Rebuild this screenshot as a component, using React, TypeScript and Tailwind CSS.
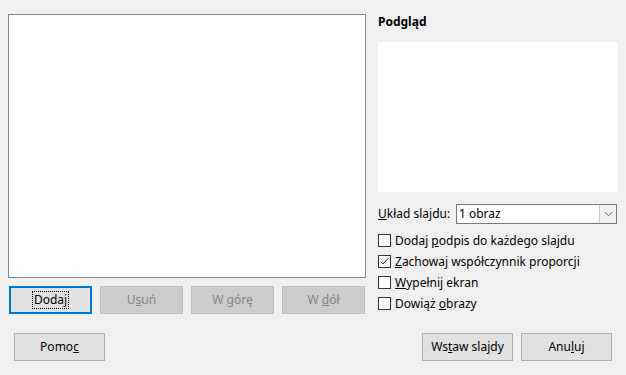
import React from "react";

const font = { fontFamily: '"Noto Sans", "Open Sans", sans-serif' };

function Btn({ children, w = "w-[83px]", disabled = false, focused = false }: { children: React.ReactNode; w?: string; disabled?: boolean; focused?: boolean }) {
  if (focused) {
    return (
      <div className={`${w} h-[28px] border-2 border-[#0078d7] bg-[#e1e1e1] flex items-center justify-center text-[12px] text-black`}>
        <span className="outline-1 outline-dotted outline-black px-[1px] leading-[16px]">{children}</span>
      </div>
    );
  }
  return (
    <div
      className={`${w} h-[28px] border flex items-center justify-center text-[12px] ${
        disabled ? "border-[#bfbfbf] bg-[#cccccc] text-[#838383]" : "border-[#adadad] bg-[#e1e1e1] text-black"
      }`}
    >
      <span className="leading-[16px] whitespace-pre">{children}</span>
    </div>
  );
}

function Check({ checked = false, children }: { checked?: boolean; children: React.ReactNode }) {
  return (
    <div className="h-[21px] flex items-center">
      <div className="w-[13px] h-[13px] border border-[#333333] bg-white flex items-center justify-center">
        {checked && (
          <svg width="11" height="11" viewBox="0 0 11 11">
            <polyline points="1.5,5.5 4,8 9.5,2" fill="none" stroke="#333" strokeWidth="1" />
          </svg>
        )}
      </div>
      <span className="ml-[4px] text-[12px] text-black leading-[16px]">{children}</span>
    </div>
  );
}

export default function App() {
  return (
    <div className="w-[626px] h-[375px] bg-[#f0f0f0] overflow-hidden" style={font}>
      <div className="flex">
        <div className="pl-[8px] pt-[14px]">
          <div className="w-[358px] h-[264px] border border-[#828790] bg-white" />
          <div className="flex gap-[8px] mt-[8px] ml-[1px]">
            <Btn focused>
              Doda<u>j</u>
            </Btn>
            <Btn disabled>
              U<u>s</u>uń
            </Btn>
            <Btn disabled>
              {"W "}<u>g</u>órę
            </Btn>
            <Btn disabled>
              {"W "}<u>d</u>ół
            </Btn>
          </div>
        </div>
        <div className="ml-[12px] pt-[14px] w-[240px]">
          <div className="h-[16px] leading-[16px] text-[12px] font-bold text-black">Podgląd</div>
          <div className="mt-[12px] h-[150px] bg-white" />
          <div className="mt-[12px] flex items-center h-[20px]">
            <span className="text-[12px] text-black w-[78px]">
              <u>U</u>kład slajdu:
            </span>
            <div className="w-[161px] h-[20px] border border-[#7a7a7a] bg-white flex items-center">
              <span className="flex-1 pl-[2px] text-[12px] text-black leading-[16px]">1 obraz</span>
              <div className="w-[17px] h-[18px] border-l border-[#cccccc] bg-[#f0f0f0] flex items-center justify-center">
                <svg width="9" height="6" viewBox="0 0 9 6">
                  <polyline points="0.5,0.8 4.5,4.8 8.5,0.8" fill="none" stroke="#606060" strokeWidth="1" />
                </svg>
              </div>
            </div>
          </div>
          <div className="mt-[6px]">
            <Check>
              Dodaj <u>p</u>odpis do każdego slajdu
            </Check>
            <Check checked>
              <u>Z</u>achowaj współczynnik proporcji
            </Check>
            <Check>
              <u>W</u>ypełnij ekran
            </Check>
            <Check>
              Dowiąż <u>o</u>brazy
            </Check>
          </div>
        </div>
      </div>
      <div className="flex mt-[19px] pl-[14px]">
        <Btn w="w-[91px]">
          Pomo<u>c</u>
        </Btn>
        <div className="ml-[317px] flex gap-[8px]">
          <Btn w="w-[91px]">
            Ws<u>t</u>aw slajdy
          </Btn>
          <Btn w="w-[91px]">
            Anu<u>l</u>uj
          </Btn>
        </div>
      </div>
    </div>
  );
}
